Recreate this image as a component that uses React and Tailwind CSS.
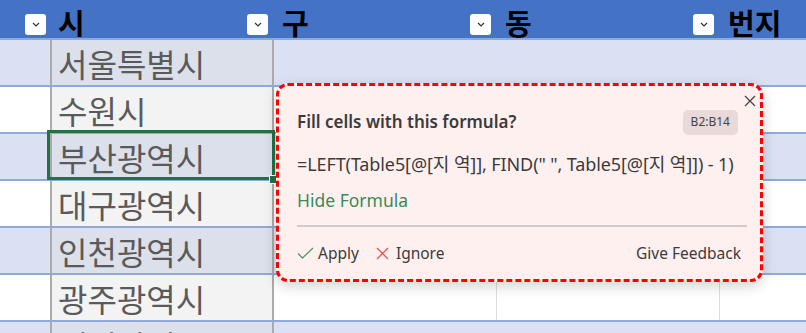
import React from 'react';

const cities = ['서울특별시', '수원시', '부산광역시', '대구광역시', '인천광역시', '광주광역시', '대전광역시'];

const FilterButton = () => (
    <div className="w-[21px] h-[21px] bg-white rounded-[3px] flex items-center justify-center shrink-0">
        <svg width="8" height="5" viewBox="0 0 8 5">
            <path d="M1 1 L4 4 L7 1" fill="none" stroke="#333" strokeWidth="1.2" />
        </svg>
    </div>
);

const HeaderCell = ({ label, width, last }) => (
    <div className={`${width} h-full flex items-start pt-[14px] justify-between pr-[6px]`}>
        <span className="pl-[8px] -mt-[11px] text-[29px] font-bold text-black leading-[38px]">{label}</span>
        {!last && <FilterButton />}
    </div>
);

const App = () => {
    return (
        <div
            className="relative w-[806px] h-[333px] overflow-hidden bg-white"
            style={{ fontFamily: '"Noto Sans", "Noto Sans CJK KR", sans-serif' }}
        >
            {/* header */}
            <div className="flex h-[38px] bg-[#4472C4]" style={{ fontFamily: '"Noto Sans CJK KR", sans-serif' }}>
                <div className="w-[50px] h-full flex items-start justify-end pt-[14px] pr-[4px]">
                    <FilterButton />
                </div>
                <HeaderCell label="시" width="w-[224px]" />
                <HeaderCell label="구" width="w-[223px]" />
                <HeaderCell label="동" width="w-[223px]" />
                <HeaderCell label="번지" width="flex-1" last />
            </div>

            {/* rows */}
            {cities.map((city, i) => {
                const band = i % 2 === 0;
                return (
                    <div
                        key={city}
                        className={`flex h-[47px] border-t-2 border-[#8EA9DB] ${band ? 'bg-[#D9E1F2]' : 'bg-white'}`}
                    >
                        <div className="w-[50px]" />
                        <div
                            className={`w-[224px] border-x-2 border-[#ABABAB] flex items-center pl-[6px] text-[32px] text-[#5A5A5A] overflow-hidden whitespace-nowrap ${band ? 'bg-[#DCE0EA]' : 'bg-[#F3F3F3]'}`}
                            style={{ fontFamily: '"Noto Sans CJK KR", sans-serif' }}
                        >
                            {city}
                        </div>
                        <div className={`w-[223px] ${band ? '' : 'border-r border-[#DEDEDE]'}`} />
                        <div className={`w-[223px] ${band ? '' : 'border-r border-[#DEDEDE]'}`} />
                        <div className="flex-1" />
                    </div>
                );
            })}

            {/* active cell */}
            <div className="absolute left-[47px] top-[130px] w-[228px] h-[50px] border-[3px] border-[#217346]" />
            <div className="absolute left-[269px] top-[175px] w-[9px] h-[9px] bg-[#217346] border border-white" />

            {/* formula suggestion card */}
            <div className="absolute left-[276px] top-[83px] w-[487px] h-[199px] rounded-[12px] border-[3px] border-dashed border-[#FF0000] bg-[#FFF0F0] shadow-[0_4px_14px_rgba(0,0,0,0.18)] pl-[18px] pr-[14px] text-[#3B3B3B]">
                <svg className="absolute right-[4px] top-[9px]" width="12" height="12" viewBox="0 0 12 12">
                    <path d="M1 1 L11 11 M11 1 L1 11" stroke="#444" strokeWidth="1.3" />
                </svg>
                <div className="flex items-center justify-between mt-[23px] h-[26px]">
                    <span className="text-[17px] font-semibold">Fill cells with this formula?</span>
                    <span className="mr-[8px] h-[25px] px-[8px] rounded-[5px] bg-[#EAD9D9] text-[12px] flex items-center text-[#444]">
                        B2:B14
                    </span>
                </div>
                <div className="mt-[18px] text-[18px] leading-[22px] whitespace-nowrap tracking-[-0.1px]">
                    =LEFT(Table5[@[지 역]], FIND(" ", Table5[@[지 역]]) - 1)
                </div>
                <div className="mt-[14px] text-[17.5px] leading-[22px] text-[#3A8A58]">Hide Formula</div>
                <div className="mt-[14px] mr-[-1px] h-[2px] bg-[#D6C8C8]" />
                <div className="flex items-center justify-between mt-[15px] text-[15.5px] leading-[22px] pr-[5px]">
                    <div className="flex items-center">
                        <svg width="17" height="14" viewBox="0 0 17 14">
                            <path d="M1 7.5 L5.5 12 L16 2" fill="none" stroke="#4F9A6B" strokeWidth="1.3" />
                        </svg>
                        <span className="ml-[4px]">Apply</span>
                        <svg className="ml-[17px]" width="13" height="13" viewBox="0 0 13 13">
                            <path d="M1 1 L12 12 M12 1 L1 12" stroke="#E05555" strokeWidth="1.3" />
                        </svg>
                        <span className="ml-[7px]">Ignore</span>
                    </div>
                    <span>Give Feedback</span>
                </div>
            </div>
        </div>
    );
};

export default App;
